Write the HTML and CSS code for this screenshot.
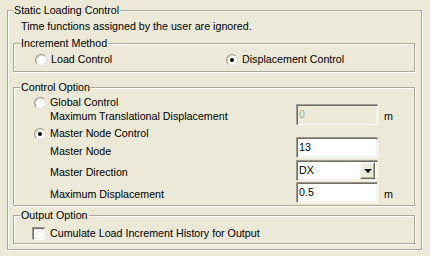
FILE: index.html
```html
<!DOCTYPE html>
<html>
<head>
<meta charset="utf-8">
<link rel="stylesheet" href="styles.css">
</head>
<body>
<div class="group outer">
  <span class="legend">Static Loading Control</span>
  <p class="note">Time functions assigned by the user are ignored.</p>

  <div class="group inc">
    <span class="legend">Increment Method</span>
    <div class="inc-row">
      <label class="opt opt-load"><span class="radio"></span>Load Control</label>
      <label class="opt"><span class="radio on"></span>Displacement Control</label>
    </div>
  </div>

  <div class="group ctrl">
    <span class="legend">Control Option</span>
    <label class="opt row-global"><span class="radio"></span>Global Control</label>
    <div class="field row-maxtrans">
      <span class="lbl">Maximum Translational Displacement</span>
      <span class="box disabled">0</span>
      <span class="unit">m</span>
    </div>
    <label class="opt row-mnc"><span class="radio on"></span>Master Node Control</label>
    <div class="field row-node">
      <span class="lbl">Master Node</span>
      <span class="box">13</span>
    </div>
    <div class="field row-dir">
      <span class="lbl">Master Direction</span>
      <span class="box combo"><span class="combo-val">DX</span><span class="combo-btn"><span class="tri"></span></span></span>
    </div>
    <div class="field row-disp">
      <span class="lbl">Maximum Displacement</span>
      <span class="box">0.5</span>
      <span class="unit">m</span>
    </div>
  </div>

  <div class="group out">
    <span class="legend">Output Option</span>
    <label class="opt row-check"><span class="check"></span>Cumulate Load Increment History for Output</label>
  </div>
</div>
</body>
</html>
```

FILE: styles.css
```css
html, body {
  margin: 0;
  padding: 0;
  background: #ECE9D8;
}
body {
  width: 430px;
  height: 256px;
  overflow: hidden;
  font-family: "Liberation Sans", Arial, sans-serif;
  font-size: 10.7px;
  line-height: 13px;
  color: #000;
}
.group {
  display: flex;
  flex-direction: column;
  box-sizing: border-box;
  border: 1px solid #ACA899;
  box-shadow: inset 1px 1px 0 #fff, 1px 1px 0 #fff;
}
.legend {
  align-self: flex-start;
  height: 13px;
  line-height: 13px;
  margin: -7px 0 0 6px;
  padding: 0 1px;
  background: #ECE9D8;
  white-space: nowrap;
}
.outer {
  margin: 10px 0 0 7px;
  width: 415px;
  height: 240px;
  padding: 0 6px 0 5px;
}
.outer > .legend {
  margin-left: 0;
}
.note {
  margin: 3px 0 0 8px;
  height: 13px;
  white-space: nowrap;
}
.inc {
  margin-top: 10px;
  height: 29px;
}
.inc-row {
  display: flex;
  margin-top: 3px;
  padding-left: 21px;
}
.opt {
  display: flex;
  align-items: center;
  height: 13px;
  white-space: nowrap;
}
.opt-load {
  width: 191px;
}
.radio {
  position: relative;
  box-sizing: border-box;
  width: 12px;
  height: 12px;
  margin-right: 4px;
  border-radius: 50%;
  background: #fff;
  border: 1px solid;
  border-color: #9c9a8f #e4e2d8 #e4e2d8 #9c9a8f;
  box-shadow: inset 1px 1px 0 #d8d6cc;
  flex: none;
}
.radio.on::after {
  content: "";
  position: absolute;
  left: 3px;
  top: 3px;
  width: 4px;
  height: 4px;
  border-radius: 50%;
  background: #000;
}
.ctrl {
  margin-top: 15px;
  height: 119px;
}
.ctrl > .opt,
.ctrl > .field {
  margin-left: 20px;
}
.row-global {
  margin-top: 2px;
}
.field {
  display: flex;
  align-items: flex-start;
  height: 21px;
  white-space: nowrap;
}
.lbl {
  width: 246px;
  margin-left: 16px;
  flex: none;
}
.row-maxtrans { margin-top: -5px; }
.row-maxtrans .lbl { padding-top: 6px; }
.row-mnc { margin-top: 2px; }
.row-node { margin-top: -3px; }
.row-node .lbl { padding-top: 8px; }
.row-dir { margin-top: 2px; }
.row-dir .lbl { padding-top: 6px; }
.row-disp { margin-top: 1px; }
.row-disp .lbl { padding-top: 6px; }

.box {
  box-sizing: border-box;
  display: flex;
  align-items: center;
  width: 82px;
  height: 21px;
  padding-left: 2px;
  background: #fff;
  border: 1px solid;
  border-color: #9c9a8f #fff #fff #9c9a8f;
  box-shadow: inset 1px 1px 0 #716F64, inset -1px -1px 0 #F1EFE2;
  flex: none;
}
.box.disabled {
  background: #ECE9D8;
  color: #ACA899;
}
.unit {
  margin-left: 6px;
  padding-top: 6px;
}
.combo {
  padding-right: 2px;
  justify-content: space-between;
}
.combo-btn {
  box-sizing: border-box;
  display: flex;
  align-items: center;
  justify-content: center;
  width: 15px;
  height: 17px;
  background: #ECE9D8;
  border: 1px solid;
  border-color: #F1EFE2 #716F64 #716F64 #F1EFE2;
  box-shadow: inset 1px 1px 0 #fff, inset -1px -1px 0 #ACA899;
}
.tri {
  width: 0;
  height: 0;
  border-left: 4px solid transparent;
  border-right: 4px solid transparent;
  border-top: 4px solid #000;
}
.out {
  margin-top: 9px;
  height: 29px;
}
.row-check {
  margin-top: 5px;
  margin-left: 18px;
}
.check {
  box-sizing: border-box;
  width: 13px;
  height: 13px;
  margin-right: 5px;
  background: #fff;
  border: 1px solid;
  border-color: #9c9a8f #fff #fff #9c9a8f;
  box-shadow: inset 1px 1px 0 #716F64, inset -1px -1px 0 #F1EFE2;
  flex: none;
}
```
